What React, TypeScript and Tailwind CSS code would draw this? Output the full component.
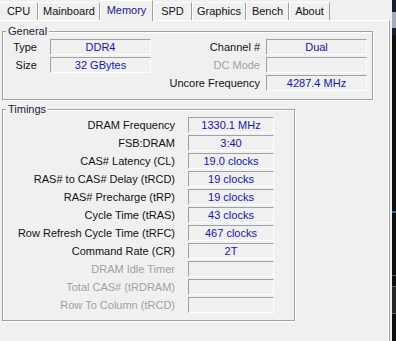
import React from "react";

const tabs = [
  { name: "CPU", w: "w-[38px]", first: true },
  { name: "Mainboard", w: "w-[62px]" },
  { name: "Memory", w: "w-[53px]", active: true },
  { name: "SPD", w: "w-[39px]" },
  { name: "Graphics", w: "w-[54px]" },
  { name: "Bench", w: "w-[43px]" },
  { name: "About", w: "w-[41px]" },
];

const timings = [
  { label: "DRAM Frequency", value: "1330.1 MHz" },
  { label: "FSB:DRAM", value: "3:40" },
  { label: "CAS# Latency (CL)", value: "19.0 clocks" },
  { label: "RAS# to CAS# Delay (tRCD)", value: "19 clocks" },
  { label: "RAS# Precharge (tRP)", value: "19 clocks" },
  { label: "Cycle Time (tRAS)", value: "43 clocks" },
  { label: "Row Refresh Cycle Time (tRFC)", value: "467 clocks" },
  { label: "Command Rate (CR)", value: "2T" },
  { label: "DRAM Idle Timer", value: "", disabled: true },
  { label: "Total CAS# (tRDRAM)", value: "", disabled: true },
  { label: "Row To Column (tRCD)", value: "", disabled: true },
];

// sunken read-only edit box
const Field = ({ value, className }: { value?: string; className: string }) => (
  <div
    className={`h-[16px] ${className} border border-t-[#a0a0a0] border-l-[#a0a0a0] border-b-white border-r-white flex items-center justify-center text-[#1515a8] leading-none pt-px`}
  >
    {value}
  </div>
);

const Label = ({ text, className, disabled }: { text: string; className: string; disabled?: boolean }) => (
  <div className={`${className} text-right leading-none pt-[3px] whitespace-nowrap ${disabled ? "text-[#a0a0a0]" : "text-[#111]"}`}>
    {text}
  </div>
);

const App = () => {
  return (
    <div className="w-[396px] h-[341px] overflow-hidden flex bg-[#f0f0f0] font-['Liberation_Sans',sans-serif] text-[11px]">
      <div className="w-[392px] flex flex-col">
        {/* tab strip */}
        <div className="h-[20px] flex items-end">
          {tabs.map((t) =>
            t.active ? (
              <div
                key={t.name}
                className={`${t.w} h-[21px] -mb-px relative z-10 bg-[#f0f0f0] border-l border-t border-r border-l-white border-t-white border-r-[#a0a0a0] flex items-center justify-center text-[#202090] leading-none pb-[2px]`}
              >
                {t.name}
              </div>
            ) : (
              <div
                key={t.name}
                className={`${t.w} h-[18px] border-t border-r border-t-white border-r-[#a0a0a0] ${t.first ? "" : "border-l border-l-white"} flex items-center justify-center text-[#111] leading-none`}
              >
                {t.name}
              </div>
            )
          )}
        </div>

        {/* tab page */}
        <div className="w-[390px] flex-1 border-t border-r border-t-white border-r-[#a0a0a0] shadow-[inset_-1px_0_0_#fff]">
          {/* General */}
          <div className="relative mt-[10px] ml-[2px] w-[371px] h-[69px] border border-[#a0a0a0] shadow-[inset_1px_1px_0_#fff,1px_1px_0_#fff] pt-[7px] flex flex-col gap-[2px]">
            <span className="absolute left-[3px] -top-[7px] px-[2px] bg-[#f0f0f0] leading-[13px] text-[#1c1c3c]">General</span>
            <div className="flex">
              <Label text="Type" className="w-[34px]" />
              <Field value="DDR4" className="ml-[13px] w-[101px]" />
              <Label text="Channel #" className="w-[109px]" />
              <Field value="Dual" className="ml-[6px] w-[101px]" />
            </div>
            <div className="flex">
              <Label text="Size" className="w-[34px]" />
              <Field value="32 GBytes" className="ml-[13px] w-[101px]" />
              <Label text="DC Mode" className="w-[109px]" disabled />
              <Field className="ml-[6px] w-[101px]" />
            </div>
            <div className="flex">
              <div className="w-[148px]" />
              <Label text="Uncore Frequency" className="w-[109px]" />
              <Field value="4287.4 MHz" className="ml-[6px] w-[101px]" />
            </div>
          </div>

          {/* Timings */}
          <div className="relative mt-[9px] ml-[2px] w-[293px] h-[212px] border border-[#a0a0a0] shadow-[inset_1px_1px_0_#fff,1px_1px_0_#fff] pt-[7px] flex flex-col gap-[2px]">
            <span className="absolute left-[3px] -top-[7px] px-[2px] bg-[#f0f0f0] leading-[13px] text-[#1c1c3c]">Timings</span>
            {timings.map((r) => (
              <div key={r.label} className="flex">
                <Label text={r.label} className="w-[172px]" disabled={r.disabled} />
                <Field value={r.value} className="ml-[13px] w-[86px]" />
              </div>
            ))}
          </div>
        </div>
      </div>

      {/* desktop showing at the window edge */}
      <div className="w-[4px] flex flex-col">
        <div className="h-[12px] bg-[#1b1d33]" />
        <div className="h-[16px] bg-[#a4aab8]" />
        <div className="h-[7px] bg-[#1b1d33]" />
        <div className="h-[176px] bg-[#0f0f0f]" />
        <div className="h-[2px] bg-[#3a64b8]" />
        <div className="h-[62px] bg-[#0f0f0f]" />
        <div className="h-px bg-[#5a5a5a]" />
        <div className="h-[10px] bg-[#0f0f0f]" />
        <div className="h-px bg-[#5a5a5a]" />
        <div className="h-[26px] bg-[#262626]" />
        <div className="h-px bg-[#5a5a5a]" />
        <div className="flex-1 bg-[#0f0f0f]" />
      </div>
    </div>
  );
};

export default App;
